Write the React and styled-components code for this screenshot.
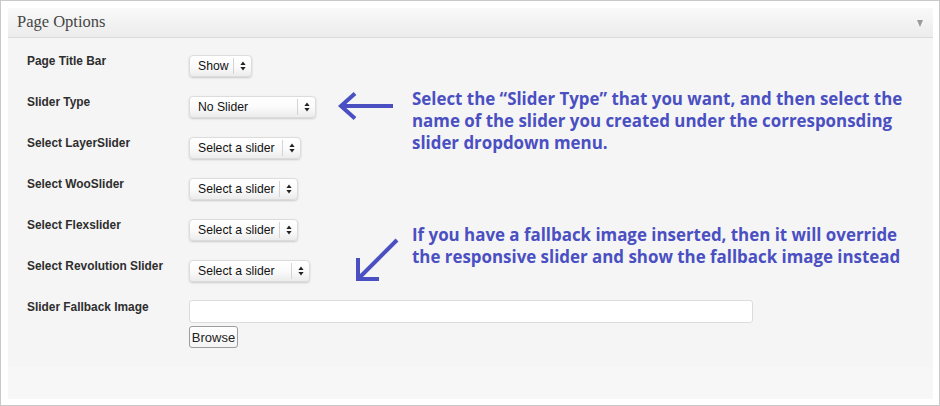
import React from 'react'
import styled, { createGlobalStyle } from 'styled-components'

const GlobalStyle = createGlobalStyle`
  html, body {
    margin: 0;
    padding: 0;
    background: #fff;
  }
  * {
    box-sizing: border-box;
  }
`

const ACCENT = '#4a4fc2'

const rows = [
  { label: 'Page Title Bar', value: 'Show', width: 63 },
  { label: 'Slider Type', value: 'No Slider', width: 127 },
  { label: 'Select LayerSlider', value: 'Select a slider', width: 112 },
  { label: 'Select WooSlider', value: 'Select a slider', width: 109 },
  { label: 'Select Flexslider', value: 'Select a slider', width: 109 },
  { label: 'Select Revolution Slider', value: 'Select a slider', width: 121 },
]

function UpDown() {
  return (
    <svg width="6" height="10" viewBox="0 0 6 10">
      <path d="M3 0.5 L5.6 4 L0.4 4 Z" fill="#222" />
      <path d="M3 9.5 L5.6 6 L0.4 6 Z" fill="#222" />
    </svg>
  )
}

function Select({ value, width }) {
  return (
    <SelectBox $width={width}>
      <SelectValue>{value}</SelectValue>
      <SelectArrow><UpDown /></SelectArrow>
    </SelectBox>
  )
}

function App() {
  return (
    <>
      <GlobalStyle />
      <Frame>
        <Panel>
          <Header>
            <Title>Page Options</Title>
            <Toggle />
          </Header>
          <Form>
            {rows.map((r) => (
              <React.Fragment key={r.label}>
                <Label>{r.label}</Label>
                <Control>
                  <Select value={r.value} width={r.width} />
                </Control>
              </React.Fragment>
            ))}

            <Note $row="2 / span 3">
              <svg width="58" height="30" viewBox="0 0 58 30">
                <path d="M4 15 H57" stroke={ACCENT} strokeWidth="4" fill="none" />
                <path d="M19 2.5 L5 15 L19 27.5" stroke={ACCENT} strokeWidth="4" fill="none" strokeLinejoin="miter" />
              </svg>
              <NoteText $top={-3}>
                Select the “Slider Type” that you want, and then select the<br />
                name of the slider you created under the corresponsding<br />
                slider dropdown menu.
              </NoteText>
            </Note>

            <Note $row="5 / span 2" $pad={19} $gap={12} $shift={5}>
              <svg width="45" height="44" viewBox="0 0 45 44" style={{ marginTop: 14 }}>
                <path d="M42 2 L5 39" stroke={ACCENT} strokeWidth="4" fill="none" />
                <path d="M3 20 V41 H24" stroke={ACCENT} strokeWidth="4" fill="none" strokeLinejoin="miter" />
              </svg>
              <NoteText $top={0}>
                If you have a fallback image inserted, then it will override<br />
                the responsive slider and show the fallback image instead
              </NoteText>
            </Note>

            <Label>Slider Fallback Image</Label>
            <FileField>
              <TextInput />
              <Button>Browse</Button>
            </FileField>
          </Form>
          <Footer />
        </Panel>
      </Frame>
    </>
  )
}

export default App

const Frame = styled.div`
  width: 940px;
  height: 406px;
  border: 1px solid #c9c9c9;
  padding: 7px 6px 6px 7px;
  background: #fff;
`

const Panel = styled.div`
  height: 100%;
  display: flex;
  flex-direction: column;
  background: #f5f5f5;
`

const Header = styled.div`
  height: 30px;
  flex-shrink: 0;
  display: flex;
  align-items: center;
  justify-content: space-between;
  padding: 0 10px 0 9px;
  background: linear-gradient(to bottom, #f9f9f9, #ececec);
  border-bottom: 1px solid #dcdcdc;
`

const Title = styled.h3`
  margin: 0;
  font-family: "Liberation Serif", Georgia, serif;
  font-weight: normal;
  font-size: 16.5px;
  color: #464646;
  padding-bottom: 1px;
`

const Toggle = styled.span`
  width: 0;
  height: 0;
  border-left: 3.5px solid transparent;
  border-right: 3.5px solid transparent;
  border-top: 7px solid #9a9a9a;
  margin-top: 2px;
`

const Form = styled.div`
  flex: 1;
  display: grid;
  grid-template-columns: 162px 147px 1fr;
  grid-auto-rows: 41px;
  padding: 17px 0 0 19px;
`

const Label = styled.div`
  grid-column: 1;
  font-family: "Liberation Sans", Arial, sans-serif;
  font-weight: bold;
  font-size: 11.9px;
  line-height: 12px;
  color: #2e2e2e;
`

const Control = styled.div`
  grid-column: 2;
  display: flex;
  align-items: flex-start;
`

const SelectBox = styled.div`
  width: ${(p) => p.$width}px;
  height: 22px;
  display: flex;
  align-items: stretch;
  border-radius: 4px;
  border: 1px solid #dcdcdc;
  background: linear-gradient(to bottom, #ffffff 0%, #fbfbfb 50%, #ececec 100%);
  box-shadow: 0 1px 2px rgba(0, 0, 0, 0.18), inset 0 1px 0 #fff;
`

const SelectValue = styled.div`
  flex: 1;
  padding-left: 8px;
  font-family: "Liberation Sans", Arial, sans-serif;
  font-size: 12.2px;
  line-height: 20px;
  color: #111;
  white-space: nowrap;
  overflow: hidden;
`

const SelectArrow = styled.div`
  width: 18px;
  display: flex;
  align-items: center;
  justify-content: center;
  border-left: 1px solid #d4d4d4;
  margin: 2px 0;
`

const Note = styled.div`
  grid-column: 3;
  grid-row: ${(p) => p.$row};
  align-self: start;
  display: flex;
  align-items: flex-start;
  gap: ${(p) => p.$gap ?? 18}px;
  padding-left: ${(p) => p.$pad ?? 0}px;
  margin-top: ${(p) => p.$shift ?? -5}px;
`

const NoteText = styled.div`
  margin-top: ${(p) => p.$top}px;
  font-family: "Open Sans", Lato, sans-serif;
  font-weight: bold;
  font-size: 16.9px;
  line-height: 22px;
  color: ${ACCENT};
  white-space: nowrap;
`

const FileField = styled.div`
  grid-column: 2 / span 2;
  align-self: start;
  display: flex;
  flex-direction: column;
  align-items: flex-start;
  gap: 3px;
  margin-top: -1px;
`

const TextInput = styled.div`
  width: 564px;
  height: 23px;
  flex-shrink: 0;
  background: #fff;
  border: 1px solid #dcdcdc;
  border-radius: 3px;
`

const Button = styled.button`
  height: 22px;
  width: 49px;
  flex-shrink: 0;
  padding: 0;
  font-family: "Liberation Sans", Arial, sans-serif;
  font-size: 13px;
  color: #222;
  background: linear-gradient(to bottom, #fff, #f4f4f4);
  border: 1px solid #9d9d9d;
  border-radius: 3px;
`

const Footer = styled.div`
  height: 32px;
  flex-shrink: 0;
  background: #f7f7f7;
`
